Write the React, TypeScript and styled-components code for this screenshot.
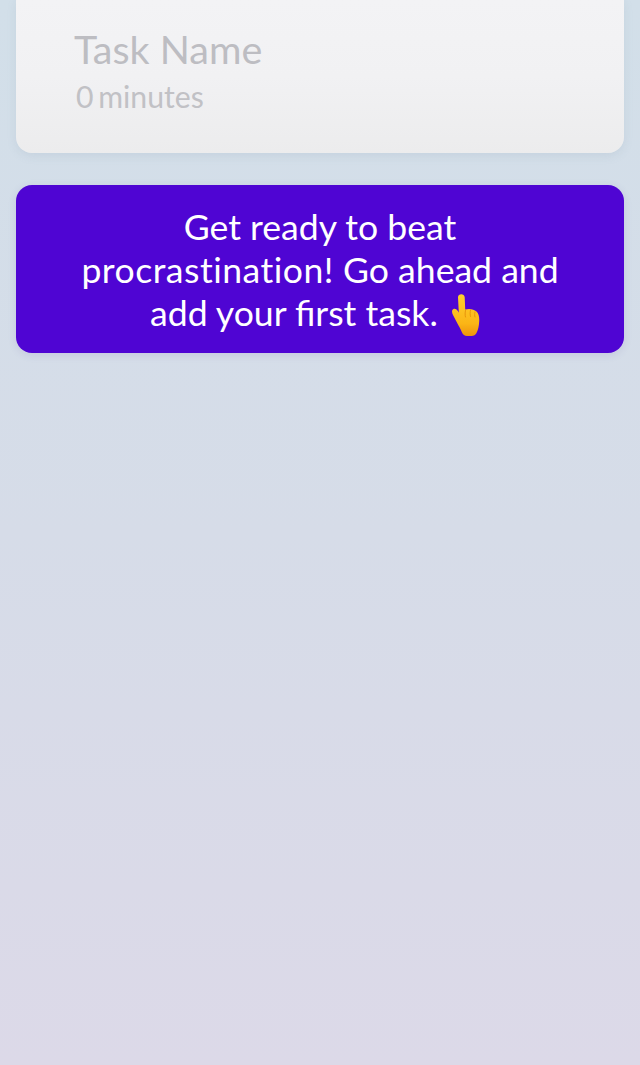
import React from 'react';
import styled, { createGlobalStyle } from 'styled-components';

const GlobalStyle = createGlobalStyle`
  html, body {
    margin: 0;
    padding: 0;
  }
  body {
    font-family: Lato, "Open Sans", sans-serif;
  }
`;

const Page = styled.div`
  box-sizing: border-box;
  width: 640px;
  height: 1065px;
  overflow: hidden;
  padding: 0 16px;
  display: flex;
  flex-direction: column;
  gap: 32px;
  background: linear-gradient(180deg, #d2dfe9 0%, #d6dce8 50%, #dcd9e8 100%);
`;

const TaskCard = styled.div`
  box-sizing: border-box;
  height: 153px;
  padding: 25px 58px 0;
  border-radius: 0 0 16px 16px;
  background: linear-gradient(180deg, #f3f3f5 0%, #f1f1f3 50%, #ececed 100%);
  box-shadow: 0 3px 10px rgba(120, 140, 165, 0.14);
`;

const TaskName = styled.div`
  font-size: 39.5px;
  line-height: 48px;
  color: #bdbdc2;
`;

const TaskTime = styled.div`
  margin: 1px 0 0 2px;
  font-size: 30.2px;
  line-height: 44px;
  word-spacing: -3px;
  color: #c1c1c5;
`;

const Banner = styled.div`
  box-sizing: border-box;
  height: 168px;
  padding: 20px 40px 0;
  border-radius: 16px;
  background: #4f05d3;
  box-shadow: 0 2px 8px rgba(80, 60, 160, 0.12);
  color: #ffffff;
  font-size: 35.6px;
  line-height: 43px;
  text-align: center;
  font-variant-ligatures: none;
`;

const LigatedWord = styled.span`
  font-variant-ligatures: common-ligatures;
`;

const WideWord = styled.span`
  letter-spacing: 0.5px;
`;

const PointingHand = styled.svg`
  width: 28px;
  height: 42px;
  margin: 0 10px 0 5px;
  vertical-align: -10px;
`;

const HandIcon = () => (
  <PointingHand viewBox="0 0 28 42">
    <defs>
      <linearGradient id="hand" x1="0" y1="0" x2="0" y2="1">
        <stop offset="0" stopColor="#ffcf2e" />
        <stop offset="0.7" stopColor="#fbb516" />
        <stop offset="1" stopColor="#ee930c" />
      </linearGradient>
    </defs>
    <path
      d="M6 3.200C6 -.8 12.500 -.8 12.700 3.200L13.200 15.500C17 14.300 22 15 24.500 17.500C26.800 19.800 27.500 23 27.200 27.500C27 32 26.200 36 24.500 39C23.500 41 21.800 42 19.500 42H15C12.500 42 11 40.800 10 38.500C9 36 8 34 6.500 31.500L1 21C-.5 18.200 -.2 15.800 1.500 15C3.200 14.200 5 15.500 6.300 17.800L6.800 18.800z"
      fill="url(#hand)"
    />
    <path
      d="M13.500 16.500C13 19 13 21 13.500 23M18.500 16C18 18.500 18 20.500 18.500 22.500M23 18C22.500 20 22.500 21.500 23 23"
      stroke="#e8940c"
      strokeWidth="1"
      strokeLinecap="round"
      fill="none"
    />
  </PointingHand>
);

const App: React.FC = () => {
  return (
    <>
      <GlobalStyle />
      <Page>
        <TaskCard>
          <TaskName>Task Name</TaskName>
          <TaskTime>0 minutes</TaskTime>
        </TaskCard>
        <Banner>
          Get ready to beat
          <br />
          <WideWord>procrastination!</WideWord> Go ahead and
          <br />
          add your <LigatedWord>first</LigatedWord> task. <HandIcon />
        </Banner>
      </Page>
    </>
  );
};

export default App;
